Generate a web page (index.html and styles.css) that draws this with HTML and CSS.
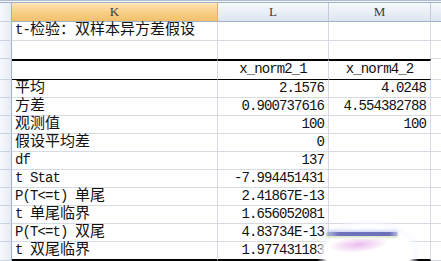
FILE: index.html
```html
<!DOCTYPE html>
<html lang="zh">
<head>
<meta charset="utf-8">
<title>t-检验</title>
<link rel="stylesheet" href="styles.css">
</head>
<body>
<div class="sheet">
  <div class="strip"></div>
  <div class="row hdr">
    <div class="rh"></div>
    <div class="ch sel">K</div>
    <div class="ch">L</div>
    <div class="ch">M</div>
    <div class="ch ex"></div>
  </div>
  <div class="row r19">
    <div class="rh"></div>
    <div class="c txt"><span class="en">t-</span>检验：双样本异方差假设</div>
    <div class="c"></div>
    <div class="c"></div>
    <div class="c ex"></div>
  </div>
  <div class="row r18 nb">
    <div class="rh"></div>
    <div class="c"></div>
    <div class="c"></div>
    <div class="c"></div>
    <div class="c ex"></div>
  </div>
  <div class="row rhead">
    <div class="rh"></div>
    <div class="c"></div>
    <div class="c num ctr">x_norm2_1</div>
    <div class="c num ctr">x_norm4_2</div>
    <div class="c ex"></div>
  </div>
  <div class="row">
    <div class="rh"></div>
    <div class="c txt">平均</div>
    <div class="c num">2.1576</div>
    <div class="c num">4.0248</div>
    <div class="c ex"></div>
  </div>
  <div class="row">
    <div class="rh"></div>
    <div class="c txt">方差</div>
    <div class="c num">0.900737616</div>
    <div class="c num">4.554382788</div>
    <div class="c ex"></div>
  </div>
  <div class="row">
    <div class="rh"></div>
    <div class="c txt">观测值</div>
    <div class="c num">100</div>
    <div class="c num">100</div>
    <div class="c ex"></div>
  </div>
  <div class="row">
    <div class="rh"></div>
    <div class="c txt">假设平均差</div>
    <div class="c num">0</div>
    <div class="c"></div>
    <div class="c ex"></div>
  </div>
  <div class="row">
    <div class="rh"></div>
    <div class="c txt"><span class="en">df</span></div>
    <div class="c num">137</div>
    <div class="c"></div>
    <div class="c ex"></div>
  </div>
  <div class="row">
    <div class="rh"></div>
    <div class="c txt"><span class="en">t Stat</span></div>
    <div class="c num">-7.994451431</div>
    <div class="c"></div>
    <div class="c ex"></div>
  </div>
  <div class="row">
    <div class="rh"></div>
    <div class="c txt"><span class="en">P(T&lt;=t) </span>单尾</div>
    <div class="c num">2.41867E-13</div>
    <div class="c"></div>
    <div class="c ex"></div>
  </div>
  <div class="row">
    <div class="rh"></div>
    <div class="c txt"><span class="en">t </span>单尾临界</div>
    <div class="c num">1.656052081</div>
    <div class="c"></div>
    <div class="c ex"></div>
  </div>
  <div class="row">
    <div class="rh"></div>
    <div class="c txt"><span class="en">P(T&lt;=t) </span>双尾</div>
    <div class="c num">4.83734E-13</div>
    <div class="c"></div>
    <div class="c ex"></div>
  </div>
  <div class="row last">
    <div class="rh"></div>
    <div class="c txt"><span class="en">t </span>双尾临界</div>
    <div class="c num">1.977431183</div>
    <div class="c"></div>
    <div class="c ex"></div>
  </div>
  <div class="smudge">
    <div class="streak"></div>
    <div class="pink"></div>
  </div>
</div>
</body>
</html>
```
FILE: styles.css
```css
* { box-sizing: border-box; }
html, body { margin: 0; padding: 0; background: #fff; }
body {
  width: 441px;
  height: 261px;
  overflow: hidden;
  font-family: "Liberation Mono", "Noto Sans CJK SC", monospace;
  font-size: 15px;
  color: #111;
}
.sheet { position: relative; width: 441px; height: 261px; overflow: hidden; }
.strip {
  height: 3px;
  border-top: 1px solid #aebdcf;
  border-bottom: 1px solid #9fb2c8;
  background: #f4f7fb;
}
.row {
  display: grid;
  grid-template-columns: 12px 206px 111px 102px 10px;
  height: 18px;
}
.hdr { height: 19px; }
.r19 { height: 19px; }
.r18 { height: 18px; }
.rhead { height: 21px; }
.last { height: 19px; }

.rh {
  background: linear-gradient(to right, #f6f8fb, #e6ebf3);
  border-right: 1px solid #9eb3cb;
  border-bottom: 1px solid #c9d3e1;
}
.ch {
  background: linear-gradient(#f7f9fc, #e9eef5 55%, #dde5ef);
  border-right: 1px solid #c0cbdb;
  border-bottom: 1px solid #9eb3cb;
  font-family: "Liberation Serif", serif;
  font-size: 13px;
  color: #3a3a3a;
  text-align: center;
  line-height: 18px;
}
.ch.sel {
  background: linear-gradient(#fde5b6, #f8cf88 50%, #f3c06a);
  border-right-color: #e2b25e;
}
.c {
  border-right: 1px solid #d6dbe3;
  border-bottom: 1px solid #d6dbe3;
  line-height: 17px;
  white-space: nowrap;
  overflow: visible;
}
.txt { padding-left: 3px; }
.en { font-size: 14px; letter-spacing: -0.9px; }
.num {
  font-size: 14px;
  letter-spacing: -0.9px;
  text-align: right;
  padding-right: 4px;
}
.num.ctr { text-align: center; padding-right: 0; }

.nb .c:not(.ex) { border-bottom: none; }
.rhead .c:not(.ex) {
  border-top: 2px solid #000;
  border-bottom: 1px solid #000;
}
.last .c:not(.ex) { border-bottom: 2px solid #000; }
.ex { border-right: none; }

.smudge {
  position: absolute;
  left: 304px;
  top: 212px;
  width: 128px;
  height: 60px;
  background: radial-gradient(ellipse 64px 40px at 50% 67%, #fff 67%, rgba(244,246,255,0.55) 74%, rgba(255,255,255,0) 82%);
}
.streak {
  position: absolute;
  left: 22px;
  top: 20px;
  width: 72px;
  height: 4px;
  border-radius: 2px;
  background: linear-gradient(to right, rgba(110,115,190,0.45), #6f74bd 18%, #6a70ba 88%, rgba(120,125,200,0.5));
  box-shadow: 0 -2px 3px rgba(190,195,240,0.7), 0 2px 2px rgba(200,215,170,0.6);
}
.pink {
  position: absolute;
  left: 24px;
  top: 27px;
  width: 58px;
  height: 14px;
  background: radial-gradient(ellipse at 50% 40%, rgba(225,160,230,0.7), rgba(255,220,240,0) 70%);
  transform: skewX(-45deg);
}
```
